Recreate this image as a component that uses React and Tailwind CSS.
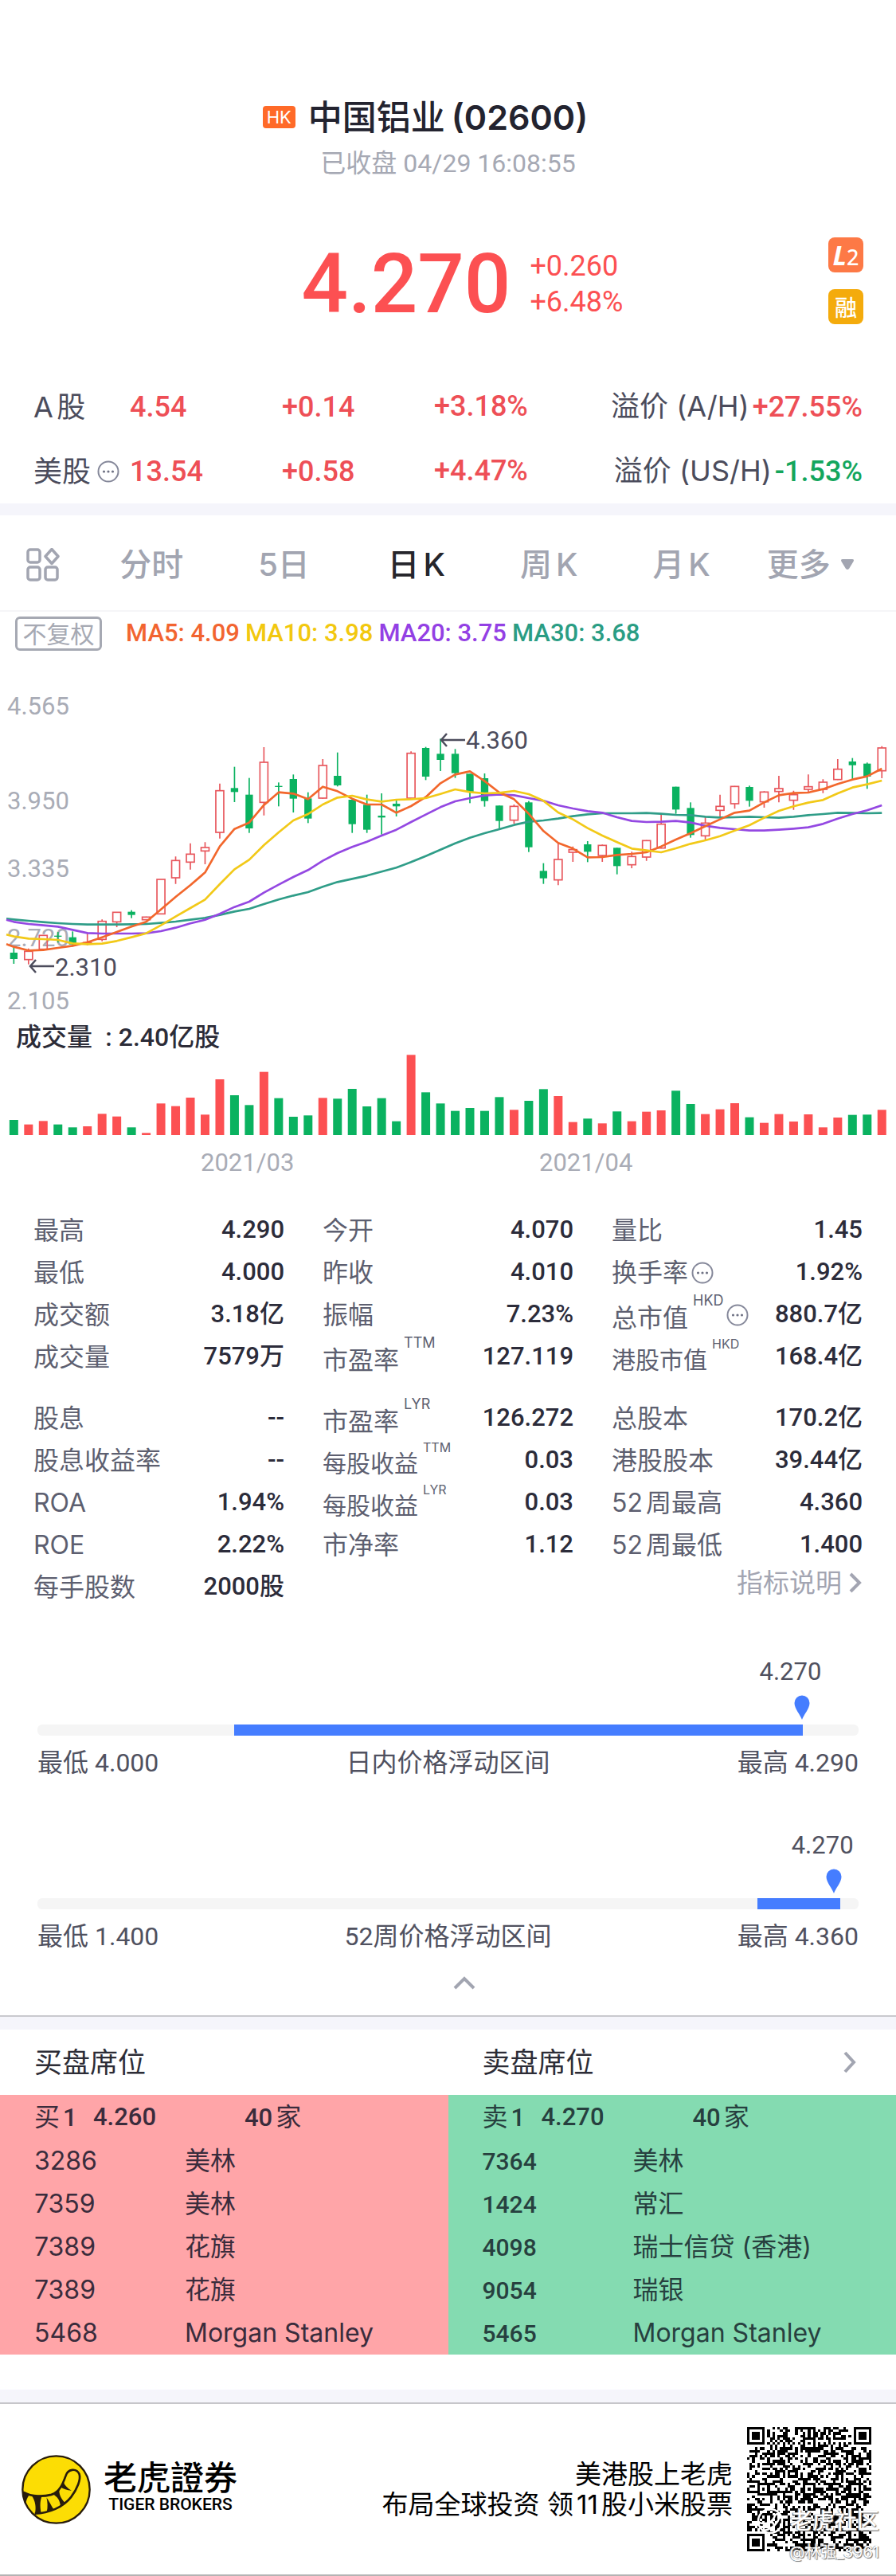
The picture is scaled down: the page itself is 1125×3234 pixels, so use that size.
import React from "react";

const CANDLES = [
  ["d", 1045, 1068, 1092, 1110], ["u", 1052, 1063, 1094, 1112], ["u", 1003, 1003, 1055, 1055],
  ["d", 990, 1004, 1008, 1030], ["d", 988, 1010, 1037, 1045], ["u", 995, 1030, 1034, 1040],
  ["u", 943, 950, 1018, 1025], ["u", 915, 916, 952, 972], ["d", 908, 914, 926, 938],
  ["u", 932, 934, 944, 946], ["u", 792, 792, 922, 922], ["u", 706, 721, 786, 809],
  ["u", 656, 697, 727, 755], ["u", 652, 672, 685, 735], ["u", 431, 458, 615, 638],
  ["d", 368, 448, 463, 501], ["d", 410, 473, 600, 617], ["u", 294, 351, 502, 551],
  ["d", 427, 440, 444, 517], ["d", 397, 414, 488, 540], ["d", 464, 487, 563, 580],
  ["u", 339, 363, 486, 488], ["d", 314, 402, 438, 442], ["d", 490, 492, 584, 617],
  ["d", 473, 511, 605, 617], ["d", 468, 552, 559, 623], ["d", 493, 507, 517, 555],
  ["u", 310, 317, 486, 488], ["d", 293, 297, 405, 418], ["d", 262, 319, 342, 384],
  ["d", 301, 319, 392, 410], ["d", 394, 394, 462, 505], ["d", 393, 411, 497, 518],
  ["d", 514, 514, 572, 602], ["u", 510, 517, 569, 582], ["d", 497, 502, 671, 689],
  ["d", 731, 760, 788, 809], ["u", 655, 717, 794, 814], ["u", 668, 680, 690, 726],
  ["d", 648, 660, 688, 727], ["u", 661, 664, 702, 726], ["d", 673, 673, 742, 773],
  ["u", 688, 706, 737, 750], ["u", 644, 646, 708, 722], ["u", 548, 584, 674, 676],
  ["d", 443, 443, 529, 545], ["d", 502, 523, 625, 635], ["u", 555, 580, 628, 643],
  ["u", 473, 517, 532, 555], ["u", 440, 442, 507, 526], ["d", 439, 444, 496, 518],
  ["u", 460, 463, 500, 522], ["u", 402, 450, 461, 502], ["u", 458, 473, 494, 530],
  ["u", 397, 443, 453, 462], ["u", 415, 426, 453, 467], ["u", 339, 377, 416, 418],
  ["d", 335, 348, 362, 415], ["d", 352, 356, 405, 451], ["u", 290, 297, 383, 411],
];

const AVERAGES = [
  { name: "MA30: 3.68", text: "text-[#2a9d84]", color: "#2f9d88", start: 940, ys: [943, 948, 953, 957, 960, 962, 962, 962, 961, 960, 956, 951, 944, 937, 926, 913, 903, 885, 868, 853, 840, 820, 802, 790, 778, 763, 748, 727, 704, 680, 656, 635, 618, 603, 587, 575, 570, 563, 554, 547, 543, 543, 543, 542, 545, 549, 550, 556, 559, 558, 556, 558, 560, 556, 550, 546, 541, 542, 543, 542] },
  { name: "MA20: 3.75", text: "text-[#9340e4]", color: "#9448e2", start: 944, ys: [952, 960, 965, 970, 982, 994, 996, 996, 996, 995, 987, 974, 958, 944, 922, 896, 876, 842, 812, 783, 757, 722, 693, 670, 650, 627, 605, 576, 548, 520, 498, 486, 476, 472, 475, 486, 496, 513, 525, 535, 541, 558, 572, 576, 575, 572, 578, 590, 598, 603, 608, 608, 605, 601, 596, 583, 563, 546, 532, 513] },
  { name: "MA5: 4.09", text: "text-[#f26430]", color: "#f2672c", start: 1036, ys: [1046, 1060, 1058, 1050, 1042, 1029, 1010, 990, 970, 952, 905, 858, 814, 766, 668, 602, 578, 512, 464, 469, 490, 443, 460, 488, 510, 510, 541, 516, 482, 430, 397, 385, 422, 465, 490, 545, 610, 655, 676, 709, 708, 700, 696, 690, 668, 642, 618, 592, 566, 541, 533, 502, 475, 467, 465, 452, 433, 416, 404, 375] },
  { name: "MA10: 3.98", text: "text-[#f2c80f]", color: "#f2c918", start: 1000, ys: [1007, 1015, 1017, 1020, 1033, 1036, 1034, 1024, 1010, 995, 965, 932, 900, 868, 810, 754, 718, 663, 615, 570, 546, 510, 484, 477, 491, 499, 492, 490, 486, 470, 453, 463, 468, 466, 459, 471, 496, 540, 566, 599, 627, 652, 676, 683, 690, 675, 658, 645, 629, 608, 588, 560, 534, 517, 503, 493, 468, 446, 434, 420] },
];
const LEGEND = [AVERAGES[2], AVERAGES[3], AVERAGES[1], AVERAGES[0]];

const VOLUMES = "d57 u40 u53 d40 d29 u33 u80 u70 d29 u8 u119 u109 u141 u77 u210 d150 d113 u238 d139 d69 d74 u140 d137 d174 d108 d139 d52 u302 d161 d119 d91 d102 d91 d143 u95 d129 d173 u147 u49 d62 u44 d89 u52 u88 u93 d167 d117 u79 u97 u120 d67 u46 u79 u51 u78 u29 u66 d76 d77 u95".split(" ");

const RED = "#fc5052";
const GREEN = "#0ab260";
const cx = (i) => 52 + i * 55.42;

function Dots() {
  return (
    <svg viewBox="0 0 28 28" className="size-7 shrink-0" fill="none" stroke="#85889a" strokeWidth="2">
      <circle cx="14" cy="14" r="12.5" />
      <g fill="#6f7284" stroke="none">
        <circle cx="8.5" cy="14" r="1.6" /><circle cx="14" cy="14" r="1.6" /><circle cx="19.5" cy="14" r="1.6" />
      </g>
    </svg>
  );
}

function PriceChart() {
  const labels = [["4.565", 63], ["3.950", 182], ["3.335", 267], ["2.720", 354], ["2.105", 433]];
  return (
    <svg viewBox="0 0 1125 457" className="block w-full font-['Roboto',sans-serif] text-[31px]">
      <g fill="#a9acb6">
        {labels.map(([t, y]) => <text key={t} x="9" y={y + 11}>{t}</text>)}
      </g>
      <g transform="translate(0 17) scale(0.33333)">
        {CANDLES.map(([kind, high, top, bottom, low], i) =>
          kind === "u" ? (
            <g key={i} stroke="#e8565c" strokeWidth="5" fill="none">
              <path d={`M${cx(i)} ${high}V${top}M${cx(i)} ${bottom}V${low}`} />
              <rect x={cx(i) - 15} y={top} width="30" height={bottom - top} />
            </g>
          ) : (
            <g key={i} fill={GREEN}>
              <rect x={cx(i) - 2.5} y={high} width="5" height={low - high} />
              <rect x={cx(i) - 14} y={top} width="28" height={bottom - top} />
            </g>
          )
        )}
        {AVERAGES.map((m) => (
          <polyline key={m.name} fill="none" stroke={m.color} strokeWidth="8" strokeLinejoin="round"
            points={`24,${m.start} ` + m.ys.map((y, i) => `${cx(i)},${y}`).join(" ")} />
        ))}
      </g>
      <g fill="none" stroke="#4c4c5c" strokeWidth="2.5">
        <path d="M554 106H584M561 98L554 106L561 114" />
        <path d="M38 390H68M45 382L38 390L45 398" />
      </g>
      <g fill="#4c4c5c">
        <text x="585" y="117">4.360</text>
        <text x="69" y="402">2.310</text>
      </g>
    </svg>
  );
}

function VolumeChart() {
  return (
    <svg viewBox="0 0 1125 154" className="block w-full font-['Roboto',sans-serif] text-[31px]">
      {VOLUMES.map((v, i) => {
        const h = Number(v.slice(1)) / 3;
        return <rect key={i} x={cx(i) / 3 - 5.5} y={101 - h} width="11" height={h} fill={v[0] === "u" ? RED : GREEN} />;
      })}
      <g fill="#a9acb6">
        <text x="252" y="146">2021/03</text>
        <text x="677" y="146">2021/04</text>
      </g>
    </svg>
  );
}

const STATS = [
  [
    [["最高", "4.290"], ["最低", "4.000"], ["成交额", "3.18亿"], ["成交量", "7579万"]],
    [["股息", "--"], ["股息收益率", "--"], ["ROA", "1.94%"], ["ROE", "2.22%"], ["每手股数", "2000股"]],
  ],
  [
    [["今开", "4.070"], ["昨收", "4.010"], ["振幅", "7.23%"], ["市盈率", "127.119", "TTM"]],
    [["市盈率", "126.272", "LYR"], ["每股收益", "0.03", "TTM", "sm"], ["每股收益", "0.03", "LYR", "sm"], ["市净率", "1.12"]],
  ],
  [
    [["量比", "1.45"], ["换手率", "1.92%", null, "dots"], ["总市值", "880.7亿", "HKD", "dots"], ["港股市值", "168.4亿", "HKD", "sm"]],
    [["总股本", "170.2亿"], ["港股股本", "39.44亿"], ["52周最高", "4.360"], ["52周最低", "1.400"]],
  ],
];

function Stat({ row: [label, value, sup, mode] }) {
  return (
    <div className="flex h-[53px] items-center justify-between whitespace-nowrap">
      <dt className="flex items-center text-[#5d5f70]">
        <span className={(mode === "sm" ? "text-[30px]" : "text-[32px]") + (sup ? " pt-2" : "")}>{label}</span>
        {sup && <sup className={(mode === "sm" ? "text-[16px]" : "text-[18px]") + " top-0 ml-[6px] self-start leading-5"}>{sup}</sup>}
        {mode === "dots" && <span className="ml-1"><Dots /></span>}
      </dt>
      <dd className="font-['Roboto','Noto_Sans_CJK_SC',sans-serif] text-[31px] font-medium text-[#2c2c3a] [text-autospace:no-autospace]">{value}</dd>
    </div>
  );
}

function PriceRange({ price, pin, label, from, size, low, title, high, className }) {
  return (
    <section className={"mx-[47px] text-[32px] leading-10 text-[#50515f] " + className}>
      <div className="w-max -translate-x-1/2 font-['Roboto',sans-serif] text-[31px]" style={{ marginLeft: label }}>{price}</div>
      <svg viewBox="0 0 20 32" className="mt-[9px] block h-8 w-5 -translate-x-1/2" style={{ marginLeft: pin }}>
        <path d="M10 31C8 25 0.500 17 0.500 10a9.500 9.500 0 0 1 19 0C19.500 17 12 25 10 31Z" fill="#457dff" />
      </svg>
      <div className="mt-[5px] h-[14px] overflow-hidden rounded-md bg-[#f5f5f5]">
        <div className="h-full bg-[#457dff]" style={{ marginLeft: from, width: size }} />
      </div>
      <div className="mt-[14px] grid grid-cols-[1fr_auto_1fr] font-['Roboto','Noto_Sans_CJK_SC',sans-serif] [text-autospace:no-autospace]">
        <span>最低 {low}</span>
        <span>{title}</span>
        <span className="text-right">最高 {high}</span>
      </div>
    </section>
  );
}

function Seats({ title, side, price, rows, tone, codeClass }) {
  return (
    <table className={"w-full table-fixed text-left text-[32px] " + tone}>
      <caption className="h-[82px] bg-white pl-[43px] text-left text-[35px] leading-[82px] text-[#2c2c36]">{title}</caption>
      <colgroup><col className="w-[232px]" /><col /></colgroup>
      <tbody>
        <tr className="h-[56px]">
          <td colSpan="2" className="pl-[43px]">
            <div className="flex leading-[54px]">
              <span className="w-[74px]">{side}<b className="font-['Roboto'] text-[31px] font-medium">1</b></span>
              <b className="w-[190px] font-['Roboto'] text-[31px] font-medium">{price}</b>
              <span><b className="font-['Roboto'] text-[31px] font-medium">40</b>家</span>
            </div>
          </td>
        </tr>
        {rows.map(([code, name], i) => (
          <tr key={i} className="h-[54px]">
            <td className={"pl-[43px] " + codeClass}>{code}</td>
            <td className="whitespace-nowrap">{name}</td>
          </tr>
        ))}
      </tbody>
    </table>
  );
}

function TigerLogo() {
  return (
    <svg viewBox="0 0 260 260" className="size-[87px] shrink-0">
      <circle cx="130" cy="130" r="126" fill="#fcdd04" stroke="#281c0c" strokeWidth="7" />
      <path d="M8 140C40 158 82 157 112 149C144 139 156 106 166 78C174 52 206 48 217 72C223 92 210 126 186 158C156 196 104 219 50 220" fill="none" stroke="#281c0c" strokeWidth="8" />
      <g fill="#281c0c">
        <path d="M5 136L28 152C22 160 17 172 16 184L10 172Z" />
        <path d="M38 152H78C70 168 68 190 74 220L50 222C56 196 52 174 38 152Z" />
        <path d="M94 160C104 174 110 188 120 203L95 213C99 196 98 178 94 160Z" />
        <path d="M118 148L142 130C140 146 148 164 162 178L146 190C144 170 134 156 118 148Z" />
        <path d="M146 120L158 102C162 114 172 124 188 134C170 132 158 128 146 120Z" />
      </g>
    </svg>
  );
}

function buildQr() {
  const n = 49;
  let seed = 20210429;
  const rand = () => ((seed = (seed * 1103515245 + 12345) % 2147483648) / 2147483648);
  const grid = Array.from({ length: n }, () => Array.from({ length: n }, () => rand() < 0.5));
  for (let i = 0; i < n; i++) { grid[6][i] = i % 2 === 0; grid[i][6] = i % 2 === 0; }
  const stamp = (cy, cxx, r, dark) => {
    for (let y = -r; y <= r; y++) for (let x = -r; x <= r; x++) {
      const py = cy + y, px = cxx + x;
      if (py >= 0 && px >= 0 && py < n && px < n) grid[py][px] = dark(Math.max(Math.abs(x), Math.abs(y)));
    }
  };
  for (const [y, x] of [[6, 24], [24, 6], [24, 24], [24, 42], [42, 24], [42, 42]]) stamp(y, x, 2, (d) => d !== 1);
  for (const [y, x] of [[3, 3], [3, 45], [45, 3]]) stamp(y, x, 4, (d) => d < 2 || d === 3);
  let path = "";
  grid.forEach((row, y) => row.forEach((on, x) => { if (on) path += `M${x} ${y}h1v1h-1z`; }));
  return path;
}
const QR = buildQr();

const TABS = ["分时", "5日", "日K", "周K", "月K"];

export default function App() {
  return (
    <main className="bg-white font-['Inter','Noto_Sans_CJK_SC',sans-serif] text-[#4b4c5c] [text-autospace:normal]">
      <header className="pt-[117px]">
        <h1 className="flex items-center justify-center pr-[57px] text-[43px] leading-[60px] font-semibold text-[#23232f]">
          <span className="mr-4 flex h-7 w-[41px] items-center justify-center rounded-[4px] bg-[#ff6a28] text-[22px] font-normal text-white">HK</span>
          <span className="font-medium">中国铝业</span><span className="ml-2">(02600)</span>
        </h1>
        <p className="mt-2 text-center font-['Roboto','Noto_Sans_CJK_SC',sans-serif] text-[32px] leading-10 text-[#a6a9b4]">已收盘 04/29 16:08:55</p>
        <div className="mt-[73px] grid grid-cols-[1fr_auto_1fr] items-center px-[41px] font-['Roboto',sans-serif] font-medium text-[#fc5052]">
          <span />
          <div className="flex items-center gap-6 pt-2 pl-[36px]">
            <strong className="text-[103px] leading-[101px] font-medium">4.270</strong>
            <div className="text-[36px] leading-[45px] font-normal"><div>+0.260</div><div>+6.48%</div></div>
          </div>
          <div className="flex flex-col gap-[21px] justify-self-end">
            <div className="flex size-11 items-baseline justify-center rounded-lg bg-[#fd7946] font-['Noto_Sans'] leading-[44px] text-white">
              <b className="text-[34px] italic">L</b><span className="text-[27px] font-medium">2</span>
            </div>
            <div className="flex size-11 items-center justify-center rounded-lg bg-[#f4ab0c] font-['Noto_Sans_CJK_SC'] text-[28px] text-white">融</div>
          </div>
        </div>
        <div className="px-[42px] pt-[63px]">
          <table className="w-full table-fixed text-left text-[36px]">
            <colgroup><col className="w-[121px]" /><col className="w-[191px]" /><col className="w-[191px]" /><col /></colgroup>
            <tbody>
              {[["A股", "4.54", "+0.14", "+3.18%", "溢价 (A/H)", "+27.55%"], ["美股", "13.54", "+0.58", "+4.47%", "溢价 (US/H)", "-1.53%"]].map(([name, a, b, c, label, premium], i) => (
                <tr key={name} className="h-[81px] whitespace-nowrap">
                  <th className="font-normal"><span className="flex items-center gap-2">{name}{i === 1 && <Dots />}</span></th>
                  <td className="font-['Roboto'] font-medium text-[#ee4f56]">{a}</td>
                  <td className="font-['Roboto'] font-medium text-[#ee4f56]">{b}</td>
                  <td>
                    <span className="flex justify-between">
                      <span className="font-['Roboto'] font-medium text-[#ee4f56]">{c}</span>
                      <span>{label}<span className={"ml-1 font-['Roboto'] font-medium " + (i ? "text-[#13a65d]" : "text-[#ee4f56]")}>{premium}</span></span>
                    </span>
                  </td>
                </tr>
              ))}
            </tbody>
          </table>
        </div>
      </header>
      <div className="h-[15px] bg-[#f5f5fb]" />

      <nav className="flex h-[121px] items-center border-b-2 border-[#f5f5f8] pt-1 pr-5 text-[40px] text-[#a2a5b1]">
        <button aria-label="图表布局" className="flex w-[91px] shrink-0 justify-end pr-4">
          <svg viewBox="0 0 42 42" className="size-[42px]" fill="none" stroke="currentColor" strokeWidth="3.5" strokeLinejoin="round">
            <rect x="2" y="2" width="15" height="16" rx="3" />
            <path d="M32 1.500L40 10.500L32 19.500L24 10.500Z" />
            <rect x="2" y="24" width="15" height="16" rx="3" />
            <rect x="24" y="24" width="15" height="16" rx="3" />
          </svg>
        </button>
        <div className="ml-4 grid flex-1 grid-cols-6">
          {TABS.map((t) => (
            <button key={t} className={"font-medium " + (t === "日K" ? "text-[#26262c]" : t === "5日" ? "[text-autospace:no-autospace]" : "")}>{t}</button>
          ))}
          <button className="flex items-center justify-center gap-3 pr-2 font-medium">
            更多
            <svg viewBox="0 0 18 14" className="h-[14px] w-[18px]"><path d="M3 0H15Q18 0 16.500 3L11 12Q9 14 7 12L1.500 3Q0 0 3 0Z" fill="currentColor" /></svg>
          </button>
        </div>
      </nav>

      <div className="flex h-[55px] items-center">
        <button className="ml-[19px] h-[43px] w-[109px] rounded-md border-[3px] border-[#a6a9b3] text-[30px] leading-none text-[#a6a9b3]">不复权</button>
        <div className="ml-[30px] flex gap-[7px] font-['Roboto'] text-[31px] font-medium">
          {LEGEND.map((m) => <span key={m.name} className={m.text}>{m.name}</span>)}
        </div>
      </div>
      <PriceChart />
      <p className="pl-5 font-['Roboto','Noto_Sans_CJK_SC',sans-serif] text-[32px] leading-[44px] font-medium text-[#2c2c38] [text-autospace:no-autospace]">成交量&ensp;: 2.40亿股</p>
      <VolumeChart />

      <section className="mt-10 grid grid-cols-3 gap-12 px-[42px]">
        {STATS.map(([first, second], i) => (
          <dl key={i}>
            {first.map((r) => <Stat key={r[0]} row={r} />)}
            <div className="h-6" />
            {second.map((r, k) => <Stat key={k} row={r} />)}
            {i === 2 && (
              <div className="flex justify-end">
                <a href="#indicators" className="flex items-center gap-2 text-[33px] leading-[42px] text-[#a3a5b2]">
                  指标说明
                  <svg viewBox="0 0 18 28" className="h-7 w-[18px]" fill="none" stroke="currentColor" strokeWidth="4"><path d="M3 3L14 14L3 25" /></svg>
                </a>
              </div>
            )}
          </dl>
        ))}
      </section>

      <PriceRange className="mt-[60px]" price="4.270" label="91.7%" pin="93.1%" from="24%" size="69.2%" low="4.000" title="日内价格浮动区间" high="4.290" />
      <PriceRange className="mt-[64px]" price="4.270" label="95.6%" pin="97%" from="87.7%" size="10.1%" low="1.400" title="52周价格浮动区间" high="4.360" />

      <button aria-label="收起" className="mx-auto mt-[29px] block pl-10">
        <svg viewBox="0 0 30 18" className="h-[18px] w-[30px]" fill="none" stroke="#a2a5b1" strokeWidth="4"><path d="M3 16L15 4L27 16" /></svg>
      </button>
      <div className="mt-[32px] h-[18px] border-t-2 border-[#c9c9ce] bg-[#f5f5fb]" />

      <section className="relative grid grid-cols-2">
        <Seats title="买盘席位" side="买" price="4.260" tone="bg-[#ffa5a8] text-[#3a2c3c]" codeClass=""
          rows={[["3286", "美林"], ["7359", "美林"], ["7389", "花旗"], ["7389", "花旗"], ["5468", "Morgan Stanley"]]} />
        <Seats title="卖盘席位" side="卖" price="4.270" tone="bg-[#84dbb1] text-[#27403f]" codeClass="font-['Roboto'] text-[30px] font-medium"
          rows={[["7364", "美林"], ["1424", "常汇"], ["4098", "瑞士信贷 (香港)"], ["9054", "瑞银"], ["5465", "Morgan Stanley"]]} />
        <a href="#seats" aria-label="查看席位" className="absolute top-[27px] right-[49px]">
          <svg viewBox="0 0 18 28" className="h-7 w-[18px]" fill="none" stroke="#a2a5b1" strokeWidth="4"><path d="M3 2L14 14L3 26" /></svg>
        </a>
      </section>

      <div className="mt-11 h-[18px] border-b-2 border-[#c6c6ca] bg-[#f5f5fb]" />
      <footer className="relative flex h-[216px] items-center border-b-2 border-[#b4b4b4] pr-[31px] pl-[27px] text-black">
        <TigerLogo />
        <div className="ml-4 pb-2">
          <div className="font-['Noto_Sans_CJK_TC',sans-serif] text-[42px] leading-[46px] font-medium">老虎證券</div>
          <div className="text-center font-['Roboto'] text-[21px] leading-[26px] font-medium">TIGER BROKERS</div>
        </div>
        <p className="ml-auto text-right text-[33px] leading-[38px]">美港股上老虎<br />布局全球投资 领11股小米股票</p>
        <svg viewBox="0 0 49 49" className="ml-[18px] size-[156px] shrink-0" shapeRendering="crispEdges"><path d={QR} /></svg>
        <div className="absolute right-[21px] bottom-[10px] text-right text-white [text-shadow:1px_1px_1px_#666,-1px_0_1px_#999]">
          <div className="flex items-center justify-end gap-2 text-[28px] leading-[42px] font-medium">
            <svg viewBox="0 0 34 34" className="size-[34px]" fill="none" stroke="#fff" strokeWidth="2.5"><circle cx="17" cy="17" r="15" /><path d="M3 19C14 22 21 17 23 10C26 6 30 9 28 14C25 22 17 28 8 29M9 21V28M14 20L17 26M19 17L22 22" /></svg>
            老虎社区
          </div>
          <div className="text-[20px] leading-9">@林强_3961</div>
        </div>
      </footer>
    </main>
  );
}
